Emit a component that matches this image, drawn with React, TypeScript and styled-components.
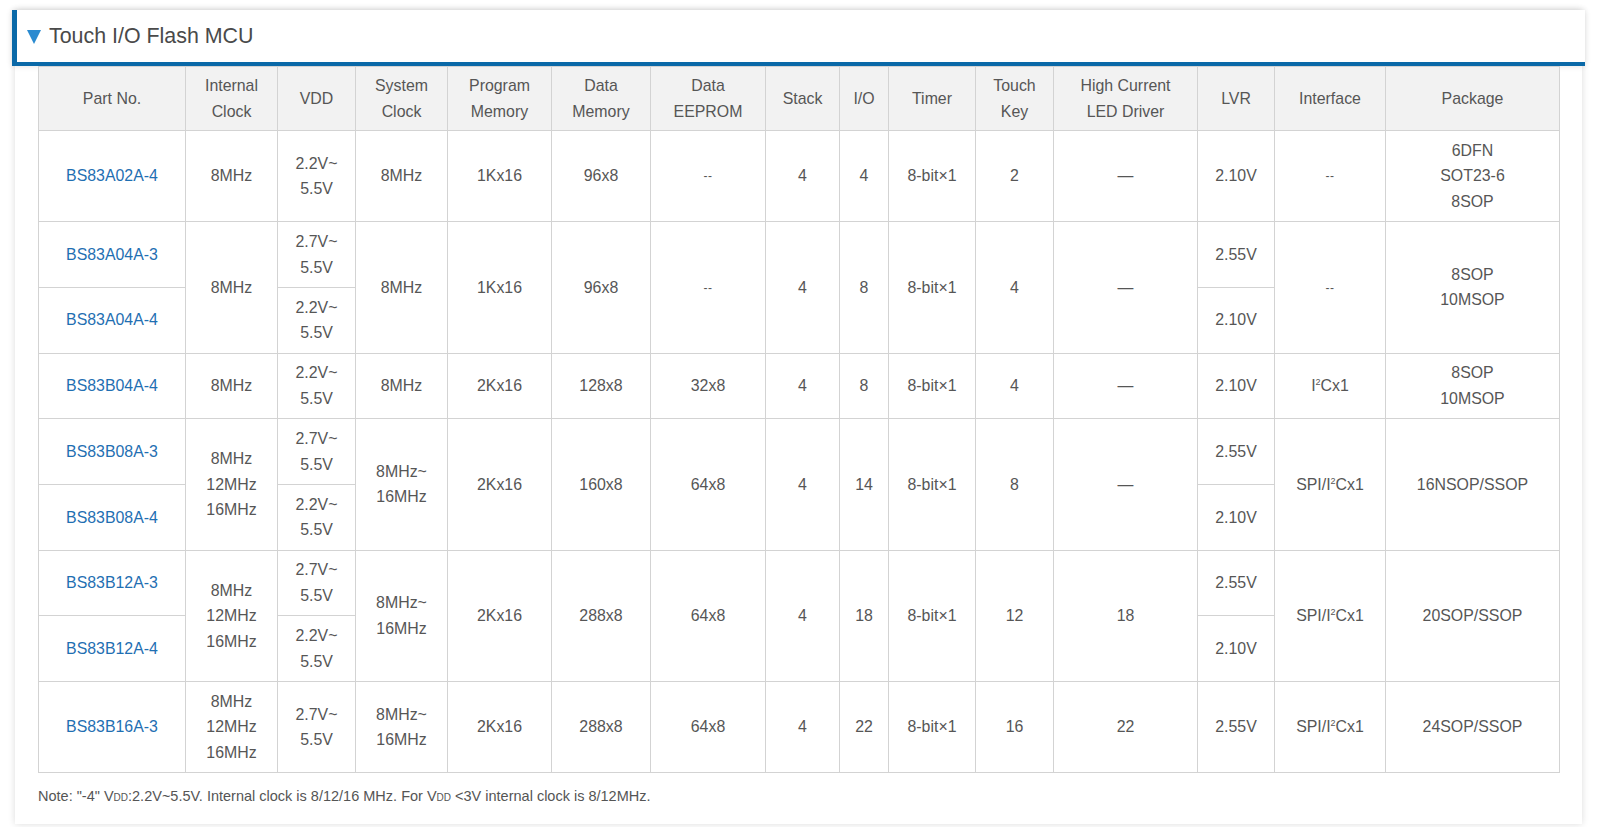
import React from "react";
import styled, { createGlobalStyle } from "styled-components";

const Global = createGlobalStyle`
  html, body { margin: 0; padding: 0; background: #ffffff; }
  body { font-family: "Liberation Sans", Arial, sans-serif; }
`;

const Page = styled.div`
  padding: 10px 19px 8px 15px;
`;

const Card = styled.section`
  background: #fff;
  box-shadow: 0 0 7px rgba(0, 0, 0, 0.14);
  padding-bottom: 20px;
`;

const Header = styled.h2`
  margin: 0 -3px;
  height: 52px;
  display: flex;
  align-items: center;
  gap: 8px;
  padding-left: 10px;
  background: #fff;
  border-left: 5px solid #0a69a8;
  border-bottom: 4px solid #0a69a8;
  font-family: "Liberation Sans", Arial, sans-serif;
  font-weight: normal;
  font-size: 21.4px;
  color: #4a4a4a;
  box-shadow: 0 0 6px rgba(0, 0, 0, 0.12);
`;

const Triangle = styled.span`
  width: 0;
  height: 0;
  border-left: 7.5px solid transparent;
  border-right: 7.5px solid transparent;
  border-top: 14px solid #2a8ad0;
  margin-top: 2px;
`;

const Body = styled.div`
  padding: 0 23px;
`;

const Table = styled.table`
  width: 1521px;
  border-collapse: collapse;
  table-layout: fixed;
  font-family: "Liberation Sans", Arial, sans-serif;
  font-size: 15.9px;
  color: #565656;
  border: 1px solid #d3d3d3;
  border-top: none;
`;

const Th = styled.th`
  background: #f2f2f2;
  font-weight: normal;
  border: 1px solid #d3d3d3;
  padding: 6px 4px;
  line-height: 25.5px;
  text-align: center;
  vertical-align: middle;
`;

const Td = styled.td`
  border: 1px solid #d3d3d3;
  padding: 6.85px 4px;
  line-height: 25.5px;
  text-align: center;
  vertical-align: middle;
  white-space: nowrap;
`;

const PartLink = styled.a`
  color: #1f6fb2;
  text-decoration: none;
`;

const Small = styled.span`
  font-size: 12px;
  letter-spacing: 0.5px;
`;

const Sup = styled.sup`
  font-size: 9px;
  vertical-align: 6px;
  line-height: 0;
`;

const Note = styled.p`
  margin: 15px 0 0;
  font-family: "Liberation Sans", Arial, sans-serif;
  font-size: 14.5px;
  color: #555;
`;

const SubCaps = styled.span`
  font-size: 10px;
`;

const widths = [147, 92, 78, 92, 104, 99, 115, 74, 49, 87, 78, 144, 77, 111, 174];

const headers: React.ReactNode[] = [
  "Part No.",
  <>Internal<br />Clock</>,
  "VDD",
  <>System<br />Clock</>,
  <>Program<br />Memory</>,
  <>Data<br />Memory</>,
  <>Data<br />EEPROM</>,
  "Stack",
  "I/O",
  "Timer",
  <>Touch<br />Key</>,
  <>High Current<br />LED Driver</>,
  "LVR",
  "Interface",
  "Package",
];

const lines = (...xs: string[]) => (
  <>
    {xs.map((x, i) => (
      <React.Fragment key={i}>
        {i > 0 && <br />}
        {x}
      </React.Fragment>
    ))}
  </>
);

const dash = <Small>--</Small>;
const emdash = "—";
const i2c = <>I<Sup>2</Sup>Cx1</>;
const spi = <>SPI/I<Sup>2</Sup>Cx1</>;
const v22 = lines("2.2V~", "5.5V");
const v27 = lines("2.7V~", "5.5V");
const clk3 = lines("8MHz", "12MHz", "16MHz");
const sys = lines("8MHz~", "16MHz");
const timer = "8-bit×1";

type Cell = { c: React.ReactNode; rs?: number; link?: boolean };
const C = (c: React.ReactNode, rs?: number): Cell => ({ c, rs });
const P = (c: string): Cell => ({ c, link: true });

const rows: Cell[][] = [
  [P("BS83A02A-4"), C("8MHz"), C(v22), C("8MHz"), C("1Kx16"), C("96x8"), C(dash), C("4"), C("4"), C(timer), C("2"), C(emdash), C("2.10V"), C(dash), C(lines("6DFN", "SOT23-6", "8SOP"))],
  [P("BS83A04A-3"), C("8MHz", 2), C(v27), C("8MHz", 2), C("1Kx16", 2), C("96x8", 2), C(dash, 2), C("4", 2), C("8", 2), C(timer, 2), C("4", 2), C(emdash, 2), C("2.55V"), C(dash, 2), C(lines("8SOP", "10MSOP"), 2)],
  [P("BS83A04A-4"), C(v22), C("2.10V")],
  [P("BS83B04A-4"), C("8MHz"), C(v22), C("8MHz"), C("2Kx16"), C("128x8"), C("32x8"), C("4"), C("8"), C(timer), C("4"), C(emdash), C("2.10V"), C(i2c), C(lines("8SOP", "10MSOP"))],
  [P("BS83B08A-3"), C(clk3, 2), C(v27), C(sys, 2), C("2Kx16", 2), C("160x8", 2), C("64x8", 2), C("4", 2), C("14", 2), C(timer, 2), C("8", 2), C(emdash, 2), C("2.55V"), C(spi, 2), C("16NSOP/SSOP", 2)],
  [P("BS83B08A-4"), C(v22), C("2.10V")],
  [P("BS83B12A-3"), C(clk3, 2), C(v27), C(sys, 2), C("2Kx16", 2), C("288x8", 2), C("64x8", 2), C("4", 2), C("18", 2), C(timer, 2), C("12", 2), C("18", 2), C("2.55V"), C(spi, 2), C("20SOP/SSOP", 2)],
  [P("BS83B12A-4"), C(v22), C("2.10V")],
  [P("BS83B16A-3"), C(clk3), C(v27), C(sys), C("2Kx16"), C("288x8"), C("64x8"), C("4"), C("22"), C(timer), C("16"), C("22"), C("2.55V"), C(spi), C("24SOP/SSOP")],
];

export default function App() {
  return (
    <>
      <Global />
      <Page>
        <Card>
          <Header>
            <Triangle />
            Touch I/O Flash MCU
          </Header>
          <Body>
            <Table>
              <colgroup>
                {widths.map((w, i) => (
                  <col key={i} style={{ width: w }} />
                ))}
              </colgroup>
              <thead>
                <tr>
                  {headers.map((h, i) => (
                    <Th key={i}>{h}</Th>
                  ))}
                </tr>
              </thead>
              <tbody>
                {rows.map((r, ri) => (
                  <tr key={ri}>
                    {r.map((cell, ci) => (
                      <Td key={ci} rowSpan={cell.rs}>
                        {cell.link ? <PartLink href="#">{cell.c}</PartLink> : cell.c}
                      </Td>
                    ))}
                  </tr>
                ))}
              </tbody>
            </Table>
            <Note>
              Note: "-4" V<SubCaps>DD</SubCaps>:2.2V~5.5V. Internal clock is 8/12/16 MHz. For V
              <SubCaps>DD</SubCaps> &lt;3V internal clock is 8/12MHz.
            </Note>
          </Body>
        </Card>
      </Page>
    </>
  );
}
